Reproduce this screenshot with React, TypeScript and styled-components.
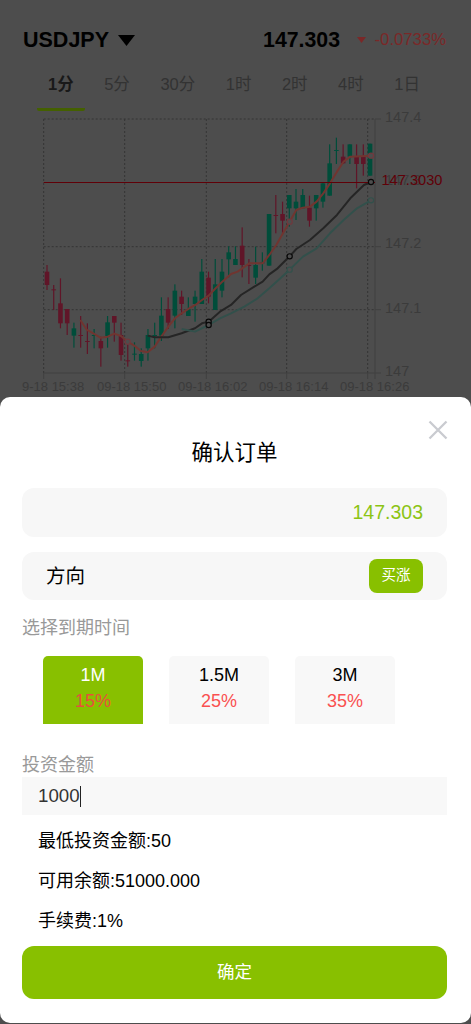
import styled, { createGlobalStyle } from "styled-components";

const GREEN = "#88c000";
const CANDLE_UP = "#009a74";
const CANDLE_DOWN = "#c02a50";

const GlobalStyle = createGlobalStyle`
  html, body {
    margin: 0;
    padding: 0;
    background: #9a9a9a;
    font-family: "Liberation Sans", "Noto Sans CJK SC", sans-serif;
  }

  * {
    box-sizing: border-box;
  }
`;

const tabs = ["1分", "5分", "30分", "1时", "2时", "4时", "1日"];

const options = [
  { label: "1M", rate: "15%" },
  { label: "1.5M", rate: "25%" },
  { label: "3M", rate: "35%" },
];

// wick top, wick bottom, body top, body bottom, up?  (values at 3x, divided when drawn)
const candles: [number, number, number, number, boolean][] = [
  [480, 555, 500, 540, false],
  [540, 615, 553, 556, false],
  [520, 670, 595, 655, false],
  [612, 690, 612, 655, false],
  [653, 728, 670, 692, true],
  [633, 728, 690, 693, false],
  [655, 747, 708, 711, false],
  [672, 730, 690, 693, true],
  [695, 785, 708, 730, false],
  [633, 728, 652, 695, true],
  [633, 710, 633, 653, false],
  [653, 767, 690, 750, false],
  [710, 785, 766, 769, false],
  [712, 767, 746, 749, true],
  [730, 785, 747, 768, true],
  [672, 767, 690, 730, true],
  [653, 730, 690, 693, true],
  [577, 708, 632, 692, true],
  [577, 672, 612, 653, false],
  [538, 670, 557, 632, true],
  [557, 630, 575, 597, false],
  [577, 633, 612, 633, true],
  [557, 650, 575, 597, true],
  [462, 597, 500, 597, true],
  [500, 595, 518, 575, false],
  [462, 615, 538, 615, true],
  [462, 577, 500, 557, true],
  [424, 517, 442, 463, true],
  [424, 480, 462, 480, true],
  [367, 517, 422, 480, false],
  [462, 537, 480, 483, false],
  [425, 537, 480, 518, true],
  [442, 497, 472, 475, true],
  [327, 482, 327, 482, true],
  [270, 385, 330, 333, false],
  [290, 385, 327, 347, false],
  [270, 365, 270, 310, true],
  [252, 345, 290, 310, true],
  [252, 310, 270, 310, true],
  [272, 365, 308, 347, false],
  [270, 347, 270, 310, true],
  [232, 308, 235, 290, true],
  [118, 272, 175, 272, true],
  [98, 177, 135, 138, true],
  [118, 177, 155, 175, false],
  [118, 177, 118, 155, true],
  [118, 250, 155, 177, false],
  [118, 212, 155, 177, false],
  [116, 212, 116, 212, true],
];

const maRed =
  "241,645 261,675 280,685 301,698 323,695 343,686 363,693 383,710 403,722 423,738 443,742 464,725 484,695 505,665 525,640 545,625 565,612 586,600 606,585 626,572 647,550 667,530 693,507 713,500 748,475 788,475 808,450 829,420 849,385 869,350 889,315 909,308 930,305 950,290 970,265 990,235 1011,200 1031,170 1051,155 1113,152";
const maBlack =
  "443,692 464,697 505,697 545,685 585,670 606,655 626,650 660,620 693,600 723,570 763,545 788,530 808,508 833,490 869,454 889,432 930,405 970,370 1011,330 1051,280 1092,240 1113,231";
const maTeal =
  "545,672 585,680 626,660 660,640 693,625 733,605 773,580 808,550 843,518 869,494 909,455 950,430 990,385 1031,345 1071,310 1113,286";

const markers = [
  { x: 383, y: 710, color: "#e0707a" },
  { x: 626, y: 650, color: "#111" },
  { x: 626, y: 660, color: "#111" },
  { x: 869, y: 350, color: "#e0707a" },
  { x: 869, y: 454, color: "#111" },
  { x: 869, y: 494, color: "#64a096" },
  { x: 1113, y: 152, color: "#e0707a" },
  { x: 1113, y: 231, color: "#111" },
  { x: 1113, y: 286, color: "#64a096" },
];

const gridX = [43.7, 124.7, 206.3, 286.7, 367.7];
const gridY = [14, 141.7, 204.7];
const priceLabels = [
  { text: "147.4", y: 13.5 },
  { text: "147.3", y: 76 },
  { text: "147.2", y: 139.5 },
  { text: "147.1", y: 204 },
  { text: "147", y: 267.5 },
];
const timeLabels = [
  { text: "9-18 15:38", x: 22 },
  { text: "09-18 15:50", x: 97 },
  { text: "09-18 16:02", x: 178 },
  { text: "09-18 16:14", x: 259 },
  { text: "09-18 16:26", x: 340 },
];

function KlineChart() {
  return (
    <ChartSvg viewBox="0 6 471 286" width={471} height={286}>
      {gridX.map((x) => (
        <line key={x} x1={x} x2={x} y1={14} y2={268} stroke="#686868" strokeDasharray="2 2" />
      ))}
      {gridY.map((y) => (
        <line key={y} x1={43.7} x2={375} y1={y} y2={y} stroke="#686868" strokeDasharray="2 2" />
      ))}
      <path d="M43.7 268H375V14M375 14h6M375 141.7h6M375 204.7h6M375 268h6" fill="none" stroke="#808080" />
      {gridX.map((x) => (
        <line key={x} x1={x} x2={x} y1={268} y2={274} stroke="#808080" />
      ))}
      <line x1={375} x2={375} y1={268} y2={274} stroke="#808080" />

      {priceLabels.map((label) => (
        <AxisText key={label.text} x={385} y={label.y} dominantBaseline="middle">
          {label.text}
        </AxisText>
      ))}
      {timeLabels.map((label) => (
        <TimeText key={label.x} x={label.x} y={283} dominantBaseline="middle">
          {label.text}
        </TimeText>
      ))}

      {candles.map(([wickTop, wickBottom, bodyTop, bodyBottom, up], i) => {
        const x = 47 + 6.73 * i;
        const color = up ? CANDLE_UP : CANDLE_DOWN;
        return (
          <g key={i} fill={color}>
            <rect x={x - 0.6} y={wickTop / 3} width={1.2} height={(wickBottom - wickTop) / 3} />
            <rect x={x - 2.3} y={bodyTop / 3} width={4.6} height={(bodyBottom - bodyTop) / 3} />
          </g>
        );
      })}

      <g transform="scale(0.3333)" fill="none" strokeWidth={6}>
        <polyline points={maRed} stroke="#e06a60" strokeLinejoin="round" />
        <polyline points={maBlack} stroke="#4a4a4a" strokeLinejoin="round" />
        <polyline points={maTeal} stroke="#64a096" strokeLinejoin="round" />
      </g>

      <line x1={43.7} x2={375} y1={77.5} y2={77.5} stroke="#c00010" />
      <PriceText x={381.5} y={76.5} dominantBaseline="middle">
        147.3030
      </PriceText>

      {markers.map((m) => (
        <circle
          key={`${m.x}-${m.y}`}
          cx={m.x / 3}
          cy={m.y / 3}
          r={2.6}
          fill="#9a9a9a"
          stroke={m.color}
          strokeWidth={1.2}
        />
      ))}
    </ChartSvg>
  );
}

export default function App() {
  return (
    <>
      <GlobalStyle />
      <Page>
        <Header>
          <Symbol>
            USDJPY
            <SymbolCaret viewBox="0 0 17 11" width={17} height={11}>
              <path d="M0 0h17L8.500 11z" fill="#000" />
            </SymbolCaret>
          </Symbol>
          <Quote>
            <Price>147.303</Price>
            <ChangeCaret viewBox="0 0 9 6" width={9} height={6}>
              <path d="M0 0h9L4.500 6z" fill="#f45050" />
            </ChangeCaret>
            <Change>-0.0733%</Change>
          </Quote>
        </Header>

        <Tabs>
          {tabs.map((tab, i) => (
            <Tab key={tab} $active={i === 0}>
              {tab}
            </Tab>
          ))}
        </Tabs>

        <KlineChart />
      </Page>

      <Overlay />

      <Sheet>
        <CloseIcon viewBox="0 0 20 20" width={20} height={20}>
          <path d="M1.500 1.500l17 17M18.500 1.500l-17 17" stroke="#c9cbd0" strokeWidth={2.3} fill="none" />
        </CloseIcon>
        <Title>确认订单</Title>

        <PriceBox>147.303</PriceBox>

        <DirectionRow>
          <DirectionLabel>方向</DirectionLabel>
          <DirectionBadge>买涨</DirectionBadge>
        </DirectionRow>

        <SectionLabel>选择到期时间</SectionLabel>
        <OptionRow>
          {options.map((option, i) => (
            <Option key={option.label} $active={i === 0}>
              <OptionLabel>{option.label}</OptionLabel>
              <OptionRate $active={i === 0}>{option.rate}</OptionRate>
            </Option>
          ))}
        </OptionRow>

        <AmountLabel>投资金额</AmountLabel>
        <AmountInput>
          1000
          <Cursor />
        </AmountInput>

        <InfoList>
          <InfoLine>最低投资金额:50</InfoLine>
          <InfoLine>可用余额:51000.000</InfoLine>
          <InfoLine>手续费:1%</InfoLine>
        </InfoList>

        <ConfirmButton>确定</ConfirmButton>
      </Sheet>
    </>
  );
}

const Page = styled.div`
  width: 471px;
  height: 1024px;
  padding-top: 26px;
  overflow: hidden;
`;

const Header = styled.header`
  display: flex;
  align-items: center;
  justify-content: space-between;
  height: 28px;
  padding: 0 25px 0 23px;
`;

const Symbol = styled.div`
  display: flex;
  align-items: center;
  gap: 9px;
  font-size: 21.5px;
  font-weight: 700;
  color: #000;
`;

const SymbolCaret = styled.svg`
  display: block;
`;

const Quote = styled.div`
  display: flex;
  align-items: center;
`;

const Price = styled.span`
  font-size: 21.3px;
  font-weight: 700;
  color: #000;
`;

const ChangeCaret = styled.svg`
  display: block;
  margin: 0 8.500px 0 17px;
`;

const Change = styled.span`
  font-size: 16.700px;
  color: #f45050;
`;

const Tabs = styled.nav`
  display: flex;
  gap: 8.500px;
  padding: 14px 0 0 37px;
`;

const Tab = styled.div<{ $active: boolean }>`
  height: 43px;
  padding: 0 11px 8px;
  line-height: 32px;
  font-size: 16.500px;
  font-weight: ${(p) => (p.$active ? 700 : 400)};
  color: ${(p) => (p.$active ? "#333" : "#666")};
  border-bottom: 3px solid ${(p) => (p.$active ? GREEN : "transparent")};
  border-radius: 2px;
`;

const ChartSvg = styled.svg`
  display: block;
  overflow: visible;
`;

const AxisText = styled.text`
  font-size: 14.500px;
  fill: #777;
`;

const TimeText = styled.text`
  font-size: 13px;
  fill: #777;
`;

const PriceText = styled.text`
  font-size: 14.600px;
  fill: #c00010;
`;

const Overlay = styled.div`
  position: fixed;
  inset: 0;
  background: rgba(0, 0, 0, 0.5);
`;

const Sheet = styled.section`
  position: fixed;
  left: 0;
  right: 0;
  bottom: 1px;
  height: 626px;
  padding: 0 24px 0 22px;
  background: #fff;
  border-radius: 10px;
`;

const CloseIcon = styled.svg`
  position: absolute;
  top: 23px;
  right: 23px;
`;

const Title = styled.h2`
  margin: 36px 0 15px;
  height: 40px;
  line-height: 40px;
  text-align: center;
  font-size: 21.500px;
  font-weight: 400;
  color: #000;
`;

const PriceBox = styled.div`
  height: 49px;
  padding-right: 24px;
  line-height: 49px;
  text-align: right;
  font-size: 19.500px;
  color: #8cc414;
  background: #f7f7f7;
  border-radius: 12px;
`;

const DirectionRow = styled.div`
  display: flex;
  align-items: center;
  justify-content: space-between;
  height: 48px;
  margin-top: 15px;
  padding: 0 24px;
  font-size: 19.500px;
  color: #000;
  background: #f7f7f7;
  border-radius: 12px;
`;

const DirectionLabel = styled.span`
  margin-top: -3px;
`;

const DirectionBadge = styled.div`
  width: 54px;
  height: 34px;
  line-height: 32px;
  text-align: center;
  font-size: 14.500px;
  color: #fff;
  background: ${GREEN};
  border-radius: 8px;
`;

const SectionLabel = styled.div`
  height: 24px;
  margin-top: 16px;
  line-height: 24px;
  font-size: 18px;
  color: #999;
`;

const OptionRow = styled.div`
  display: flex;
  gap: 26px;
  margin-top: 16px;
  padding-left: 21px;
`;

const Option = styled.div<{ $active: boolean }>`
  width: 100px;
  height: 68px;
  padding-top: 7px;
  text-align: center;
  color: ${(p) => (p.$active ? "#fff" : "#000")};
  background: ${(p) => (p.$active ? GREEN : "#f8f8f8")};
  border-radius: 5px 5px 0 0;
`;

const OptionLabel = styled.div`
  height: 24px;
  line-height: 24px;
  font-size: 18px;
`;

const OptionRate = styled.div<{ $active: boolean }>`
  margin-top: 2px;
  height: 24px;
  line-height: 24px;
  font-size: 18px;
  color: ${(p) => (p.$active ? "#e8503a" : "#fa5050")};
`;

const AmountLabel = styled(SectionLabel)`
  margin-top: 29px;
`;

const AmountInput = styled.div`
  display: flex;
  align-items: center;
  height: 38px;
  padding-left: 16px;
  font-size: 18.700px;
  color: #333;
  background: #f8f8f8;
`;

const Cursor = styled.span`
  width: 1px;
  height: 21px;
  background: #222;
`;

const InfoList = styled.div`
  margin-top: 6px;
  padding-left: 16px;
`;

const InfoLine = styled.div`
  height: 40px;
  line-height: 40px;
  font-size: 18px;
  color: #000;
`;

const ConfirmButton = styled.button`
  display: block;
  width: 100%;
  height: 53px;
  margin-top: 5px;
  padding: 0 0 4px;
  border: none;
  border-radius: 12px;
  font-family: inherit;
  font-size: 17.500px;
  color: #fff;
  background: ${GREEN};
`;
